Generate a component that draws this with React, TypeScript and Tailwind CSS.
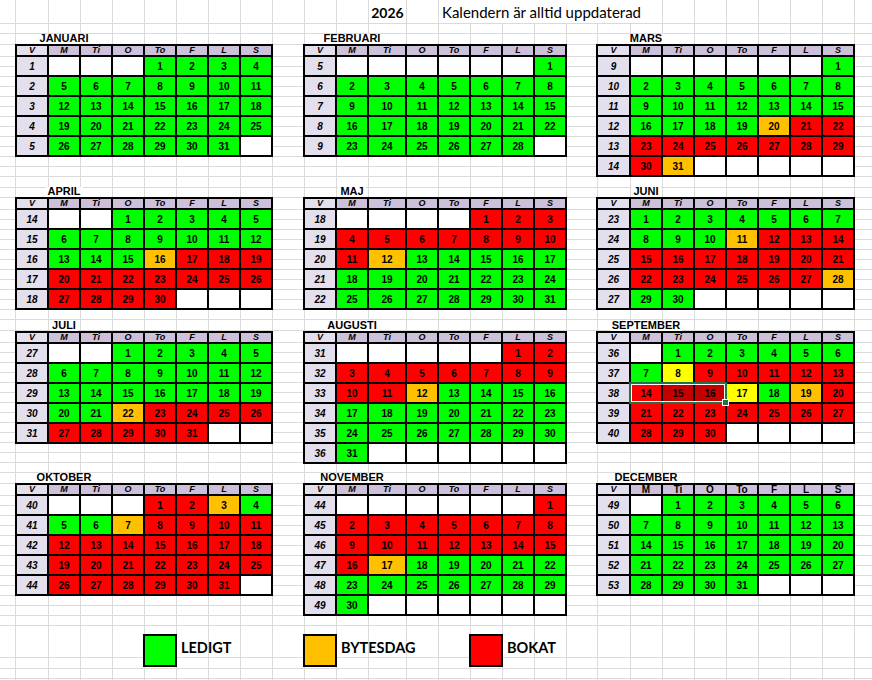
import React from "react";

type Color = "g" | "r" | "o" | "y" | "d";

type Month = {
  name: string;
  firstWeek: number;
  offset: number;
  colors: string;
  group: 0 | 1 | 2;
  plainHead?: boolean;
  selection?: boolean;
};

const rep = (c: Color, n: number) => c.repeat(n);

const months: Month[] = [
  { name: "JANUARI", firstWeek: 1, offset: 3, colors: rep("g", 31), group: 0 },
  { name: "FEBRUARI", firstWeek: 5, offset: 6, colors: rep("g", 28), group: 1 },
  { name: "MARS", firstWeek: 9, offset: 6, colors: rep("g", 19) + "o" + rep("r", 10) + "o", group: 2 },
  { name: "APRIL", firstWeek: 14, offset: 2, colors: rep("g", 15) + "o" + rep("r", 14), group: 0 },
  { name: "MAJ", firstWeek: 18, offset: 4, colors: rep("r", 11) + "o" + rep("g", 19), group: 1 },
  { name: "JUNI", firstWeek: 23, offset: 0, colors: rep("g", 10) + "o" + rep("r", 16) + "o" + rep("g", 2), group: 2 },
  { name: "JULI", firstWeek: 27, offset: 2, colors: rep("g", 21) + "o" + rep("r", 9), group: 0 },
  { name: "AUGUSTI", firstWeek: 31, offset: 5, colors: rep("r", 11) + "o" + rep("g", 19), group: 1 },
  {
    name: "SEPTEMBER",
    firstWeek: 36,
    offset: 1,
    colors: rep("g", 7) + "y" + rep("r", 6) + "dd" + "y" + "g" + "o" + rep("r", 11),
    group: 2,
    selection: true,
  },
  { name: "OKTOBER", firstWeek: 40, offset: 3, colors: rep("r", 2) + "o" + rep("g", 3) + "o" + rep("r", 24), group: 0 },
  { name: "NOVEMBER", firstWeek: 44, offset: 6, colors: rep("r", 16) + "o" + rep("g", 13), group: 1 },
  { name: "DECEMBER", firstWeek: 49, offset: 1, colors: rep("g", 31), group: 2, plainHead: true },
];

const cellColor: Record<string, string> = {
  g: "bg-[#00ff00]",
  r: "bg-[#ff0000]",
  o: "bg-[#ffc000]",
  y: "bg-[#ffff00]",
  d: "bg-[#c40000]",
};

const gridCols = [
  "grid-cols-[30px_repeat(7,30px)]",
  "grid-cols-[30px_30px_36px_repeat(5,30px)]",
  "grid-cols-[31px_repeat(7,30px)]",
];
const labelPad = ["w-[34px]", "w-[34px]", "w-[35px]"];
const blockGap = ["", "ml-[30px]", "ml-[29px]"];
const rowGap = ["mt-[9px]", "mt-[8px]", "mt-[9px]", "mt-[7px]"];

const heads = ["M", "Ti", "O", "To", "F", "L", "S"];

// excel gridlines behind the sheet
const colLines = [15, 48, 80, 112, 144, 176, 208, 240, 272, 304, 336, 368, 406, 438, 470, 502, 534, 566, 597, 630, 662, 694, 726, 758, 790, 822, 854];
const rowLines: number[] = [23, 33, 44];
const band = (start: number, n: number) => {
  for (let i = 0; i <= n; i++) rowLines.push(start + i * 10);
};
band(56, 12);
rowLines.push(187, 197);
band(209, 11);
rowLines.push(330);
band(342, 13);
rowLines.push(483);
band(495, 13);
rowLines.push(657, 668, 678);

const stops = (ps: number[]) =>
  ps.map((p) => `transparent ${p}px, #dadada ${p}px, #dadada ${p + 1}px, transparent ${p + 1}px`).join(", ");

const sheetBg = `linear-gradient(to right, transparent 0px, ${stops(colLines)}), linear-gradient(to bottom, transparent 0px, ${stops(rowLines)})`;

function MonthTable({ m }: { m: Month }) {
  const days = m.colors.length;
  const weeks = Math.ceil((m.offset + days) / 7);
  const rows = Array.from({ length: weeks }, (_, w) =>
    Array.from({ length: 7 }, (_, i) => {
      const d = w * 7 + i - m.offset + 1;
      return d >= 1 && d <= days ? d : null;
    })
  );

  return (
    <div className={`relative grid ${gridCols[m.group]} grid-rows-[9px] auto-rows-[18px] gap-[2px] border-2 border-black bg-black`}>
      <div className="flex items-center justify-center bg-[#e4dfec] text-[9px] font-bold italic leading-none">V</div>
      {heads.map((h) => (
        <div
          key={h}
          className={`flex items-center justify-center bg-[#ccc0da] font-bold leading-none ${m.plainHead ? "text-[10px]" : "text-[9px] italic"}`}
        >
          {h}
        </div>
      ))}
      {rows.map((week, w) => (
        <React.Fragment key={w}>
          <div className="flex items-center justify-center bg-[#e4dfec] text-[10px] font-bold italic">{m.firstWeek + w}</div>
          {week.map((d, i) => (
            <div
              key={i}
              className={`flex items-center justify-center text-[10px] font-bold ${d ? cellColor[m.colors[d - 1]] : "bg-white"}`}
            >
              {d ?? ""}
            </div>
          ))}
        </React.Fragment>
      ))}
      {m.selection ? (
        <div className="absolute left-[31px] top-[49px] h-[22px] w-[98px] border-2 border-[#217346] shadow-[inset_0_0_0_1px_#ffffff]">
          <div className="absolute -bottom-[4px] -right-[4px] h-[7px] w-[7px] border border-white bg-[#217346]" />
        </div>
      ) : null}
    </div>
  );
}

function MonthBlock({ m }: { m: Month }) {
  return (
    <div className={blockGap[m.group]}>
      <div className="flex h-[12px] items-end">
        <div className={labelPad[m.group]} />
        <div className="flex w-[30px] justify-center whitespace-nowrap">
          <span className="flex h-[10px] items-end bg-white px-[2px] text-[11px] font-bold leading-none">{m.name}</span>
        </div>
      </div>
      <MonthTable m={m} />
    </div>
  );
}

const legend = [
  { label: "LEDIGT", color: "bg-[#00ff00]", width: "w-[160px]" },
  { label: "BYTESDAG", color: "bg-[#ffc000]", width: "w-[166px]" },
  { label: "BOKAT", color: "bg-[#ff0000]", width: "w-[120px]" },
];

export default function App() {
  return (
    <div
      className="h-[680px] w-[872px] overflow-hidden bg-white font-['Liberation_Sans',Arial,sans-serif] text-black"
      style={{ backgroundImage: sheetBg }}
    >
      <div className="flex h-[23px] font-['Lato',sans-serif]">
        <div className="ml-[369px] flex h-[23px] w-[37px] items-center justify-center pt-[1px] text-[14px] font-bold">2026</div>
        <div className="ml-[33px] flex h-[23px] w-[223px] items-center bg-white pl-[3px] pt-[1px] text-[15px]">
          Kalendern är alltid uppdaterad
        </div>
      </div>

      {[0, 1, 2, 3].map((r) => (
        <div key={r} className={`flex items-start pl-[15px] ${rowGap[r]}`}>
          {months.slice(r * 3, r * 3 + 3).map((m) => (
            <MonthBlock key={m.name} m={m} />
          ))}
        </div>
      ))}

      <div className="mt-[18px] flex h-[33px] items-center pl-[143px]">
        {legend.map((l) => (
          <div key={l.label} className={`flex items-center ${l.width}`}>
            <div className={`h-[33px] w-[34px] border-2 border-black ${l.color}`} />
            <span className="ml-[4px] pb-[5px] font-['Lato',sans-serif] text-[14.5px] font-bold">{l.label}</span>
          </div>
        ))}
      </div>
    </div>
  );
}
